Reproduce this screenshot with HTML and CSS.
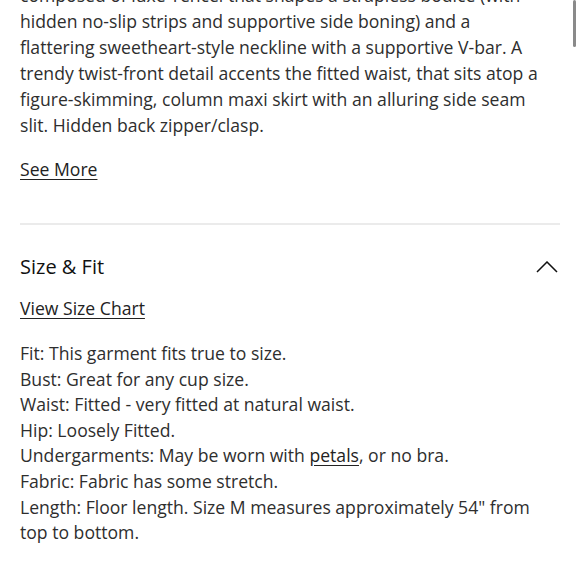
FILE: index.html
```html
<!DOCTYPE html>
<html>
<head>
<meta charset="utf-8">
<link rel="stylesheet" href="styles.css">
</head>
<body>
<div class="page">
  <p class="desc">composed of luxe Tencel that shapes a strapless bodice (with<br>hidden no-slip strips and supportive side boning) and a<br>flattering sweetheart-style neckline with a supportive V-bar. A<br>trendy twist-front detail accents the fitted waist, that sits atop a<br>figure-skimming, column maxi skirt with an alluring side seam<br>slit. Hidden back zipper/clasp.</p>
  <a class="link see-more" href="#">See More</a>
  <hr class="divider">
  <div class="section-head">
    <h2 class="section-title">Size &amp; Fit</h2>
    <svg class="chevron" width="22" height="12" viewBox="0 0 22 12"><path d="M1 11 L11 1 L21 11" fill="none" stroke="#111" stroke-width="1.5"/></svg>
  </div>
  <a class="link size-chart" href="#">View Size Chart</a>
  <ul class="fit-list">
    <li>Fit: This garment fits true to size.</li>
    <li>Bust: Great for any cup size.</li>
    <li>Waist: Fitted - very fitted at natural waist.</li>
    <li>Hip: Loosely Fitted.</li>
    <li>Undergarments: May be worn with <a class="inline-link" href="#">petals</a>, or no bra.</li>
    <li>Fabric: Fabric has some stretch.</li>
    <li>Length: Floor length. Size M measures approximately 54" from<br>top to bottom.</li>
  </ul>
</div>
<div class="scrollbar"></div>
</body>
</html>
```
FILE: styles.css
```css
html, body {
  margin: 0;
  padding: 0;
  background: #fff;
  overflow: hidden;
}
body {
  font-family: "Open Sans", "Liberation Sans", sans-serif;
  color: #2e2e2e;
  font-size: 17.6px;
}
.page {
  padding: 0 20px;
  margin-top: -18px;
}
.desc {
  margin: 0;
  line-height: 26px;
  white-space: nowrap;
}
.link {
  display: inline-block;
  margin-top: 18px;
  color: #222;
  line-height: 26px;
  text-decoration: underline;
  text-underline-offset: 3px;
}
.divider {
  border: 0;
  height: 2px;
  background: #ebebeb;
  margin: 41px 0 0 0;
}
.section-head {
  display: flex;
  align-items: center;
  justify-content: space-between;
  margin-top: 29px;
}
.section-title {
  margin: 0;
  font-size: 20px;
  font-weight: 400;
  color: #111;
  line-height: 26px;
}
.chevron {
  margin-right: 2px;
}
.size-chart {
  margin-top: 15px;
}
.fit-list {
  list-style: none;
  margin: 20px 0 0 0;
  padding: 0;
  line-height: 25.6px;
  white-space: nowrap;
}
.inline-link {
  color: #222;
  text-decoration: underline;
  text-underline-offset: 3px;
}
.scrollbar {
  position: absolute;
  top: 0;
  right: 4px;
  width: 3px;
  height: 47px;
  background: #8a8a8a;
  border-radius: 2px;
}
```
